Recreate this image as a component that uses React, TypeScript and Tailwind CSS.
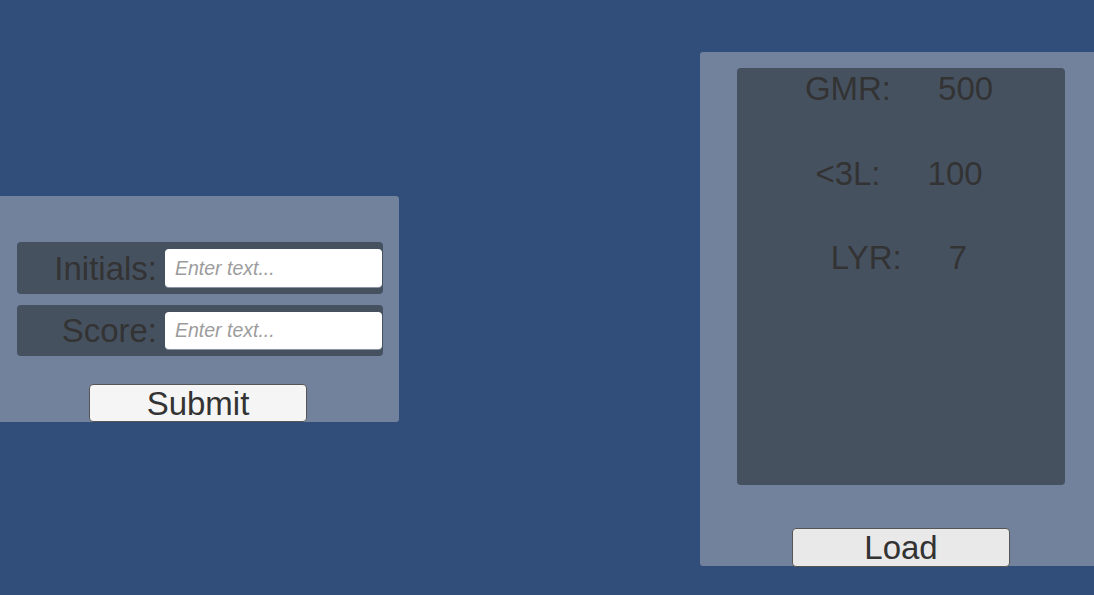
import React from "react";

export default function App() {
  const rows = [
    { label: "GMR:", value: "500" },
    { label: "<3L:", value: "100" },
    { label: "LYR:", value: "7" },
  ];
  return (
    <div className="w-[1094px] h-[595px] bg-[#314d7a] flex items-start overflow-hidden font-['Liberation_Sans',Arial,sans-serif] text-[#333333]">
      {/* Left panel */}
      <div className="mt-[196px] w-[399px] h-[226px] shrink-0 bg-[#72829d] rounded-r-[3px] pl-[17px] pr-[16px] pt-[46px] flex flex-col">
        <div className="h-[52px] bg-[#465160] rounded-[4px] flex items-center pr-[1px]">
          <div className="flex-1 text-right pr-[8px] text-[33px] leading-[33px]">Initials:</div>
          <input
            className="w-[217px] h-[38px] bg-white rounded-[4px] pl-[10px] text-[19.5px] outline-none shadow-[0_1px_0_#8a94a3] placeholder:italic placeholder:text-[#9c9c9c]"
            placeholder="Enter text..."
          />
        </div>
        <div className="mt-[11px] h-[51px] bg-[#465160] rounded-[4px] flex items-center pr-[1px]">
          <div className="flex-1 text-right pr-[8px] text-[33px] leading-[33px]">Score:</div>
          <input
            className="w-[217px] h-[37px] bg-white rounded-[4px] pl-[10px] text-[19.5px] outline-none shadow-[0_1px_0_#8a94a3] placeholder:italic placeholder:text-[#9c9c9c]"
            placeholder="Enter text..."
          />
        </div>
        <button className="mt-[28px] ml-[72px] w-[218px] h-[38px] shrink-0 bg-[#f5f5f5] border border-[#555] rounded-[4px] text-[33px] leading-[33px] text-[#333]">
          Submit
        </button>
      </div>

      {/* Right panel */}
      <div className="ml-[301px] mt-[52px] w-[394px] h-[514px] shrink-0 bg-[#72829d] rounded-l-[3px] pt-[16px] pl-[37px] flex flex-col items-start">
        <div className="w-[328px] h-[417px] shrink-0 bg-[#465160] rounded-[4px] flex flex-col pt-[4px] gap-[51.5px]">
          {rows.map((r) => (
            <div key={r.label} className="h-[33px] flex justify-center gap-[47px] pr-[4px] text-[33px] leading-[33px] whitespace-pre">
              <span>{r.label}</span>
              <span>{r.value}</span>
            </div>
          ))}
        </div>
        <button className="mt-[43px] ml-[55px] w-[218px] h-[39px] shrink-0 bg-[#e9e9e9] border border-[#555] rounded-[4px] text-[33px] leading-[33px] text-[#333]">
          Load
        </button>
      </div>
    </div>
  );
}
